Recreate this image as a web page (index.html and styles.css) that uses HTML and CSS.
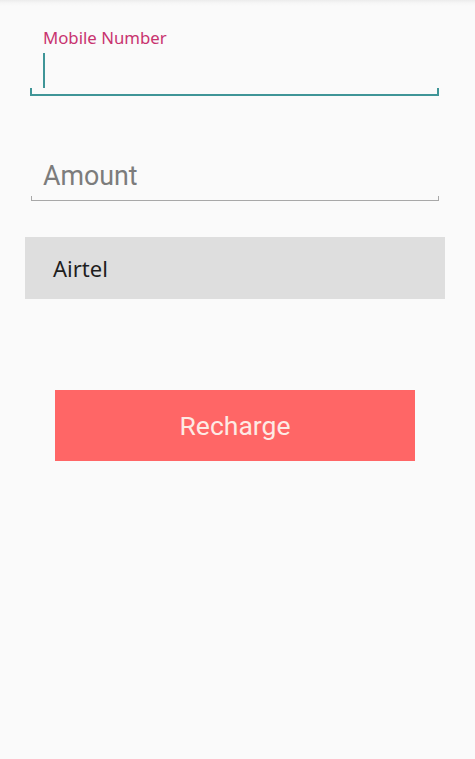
FILE: index.html
```html
<!DOCTYPE html>
<html>
<head>
<meta charset="utf-8">
<link rel="stylesheet" href="styles.css">
</head>
<body>
<div class="screen">
  <div class="field field-active">
    <div class="float-label">Mobile Number</div>
    <div class="input-area"><span class="cursor"></span></div>
  </div>
  <div class="field field-idle">
    <div class="placeholder">Amount</div>
  </div>
  <div class="spinner">Airtel</div>
  <div class="button-row">
    <div class="button">Recharge</div>
  </div>
</div>
</body>
</html>
```

FILE: styles.css
```css
html, body {
  margin: 0;
  padding: 0;
  background: #fafafa;
}
.screen {
  width: 475px;
  height: 759px;
  background: linear-gradient(#ececec 0px, #f6f6f6 3px, #fafafa 6px);
  display: flex;
  flex-direction: column;
}
.field {
  position: relative;
  margin-left: 30px;
  width: 409px;
}
.field::before, .field::after {
  content: "";
  position: absolute;
  bottom: 0;
}
.field-active {
  margin-top: 27px;
  border-bottom: 2px solid #3f9597;
}
.field-active::before, .field-active::after {
  width: 2px;
  height: 6px;
  background: #3f9597;
}
.field-active::before { left: 0; }
.field-active::after { right: 0; }
.float-label {
  padding-left: 13px;
  font-family: "Noto Sans", "Open Sans", sans-serif;
  font-size: 16.8px;
  line-height: 21px;
  color: #c8336f;
}
.input-area {
  height: 46px;
  padding-left: 13px;
  display: flex;
  align-items: flex-start;
}
.cursor {
  display: block;
  margin-top: 5px;
  width: 2px;
  height: 35px;
  background: #3f9597;
}
.field-idle {
  margin-top: 60px;
  margin-left: 31px;
  width: 408px;
  border-bottom: 1px solid #a8a8a8;
}
.field-idle::before, .field-idle::after {
  width: 1px;
  height: 4px;
  background: #a8a8a8;
}
.field-idle::before { left: 0; }
.field-idle::after { right: 0; }
.placeholder {
  padding-left: 12px;
  padding-bottom: 3px;
  font-family: Roboto, "Liberation Sans", sans-serif;
  font-size: 26.8px;
  line-height: 41px;
  color: #7c7c7c;
}
.spinner {
  margin-top: 36px;
  margin-left: 25px;
  width: 420px;
  height: 62px;
  background: #dedede;
  display: flex;
  align-items: center;
  padding-left: 28px;
  box-sizing: border-box;
  font-family: "Noto Sans", "Open Sans", sans-serif;
  font-size: 22px;
  color: #1e1e1e;
}
.button-row {
  margin-top: 91px;
  padding-left: 55px;
}
.button {
  width: 360px;
  height: 71px;
  background: #ff6666;
  display: flex;
  align-items: center;
  justify-content: center;
  font-family: Roboto, "Liberation Sans", sans-serif;
  font-size: 26.5px;
  color: #fdeae4;
}
```
